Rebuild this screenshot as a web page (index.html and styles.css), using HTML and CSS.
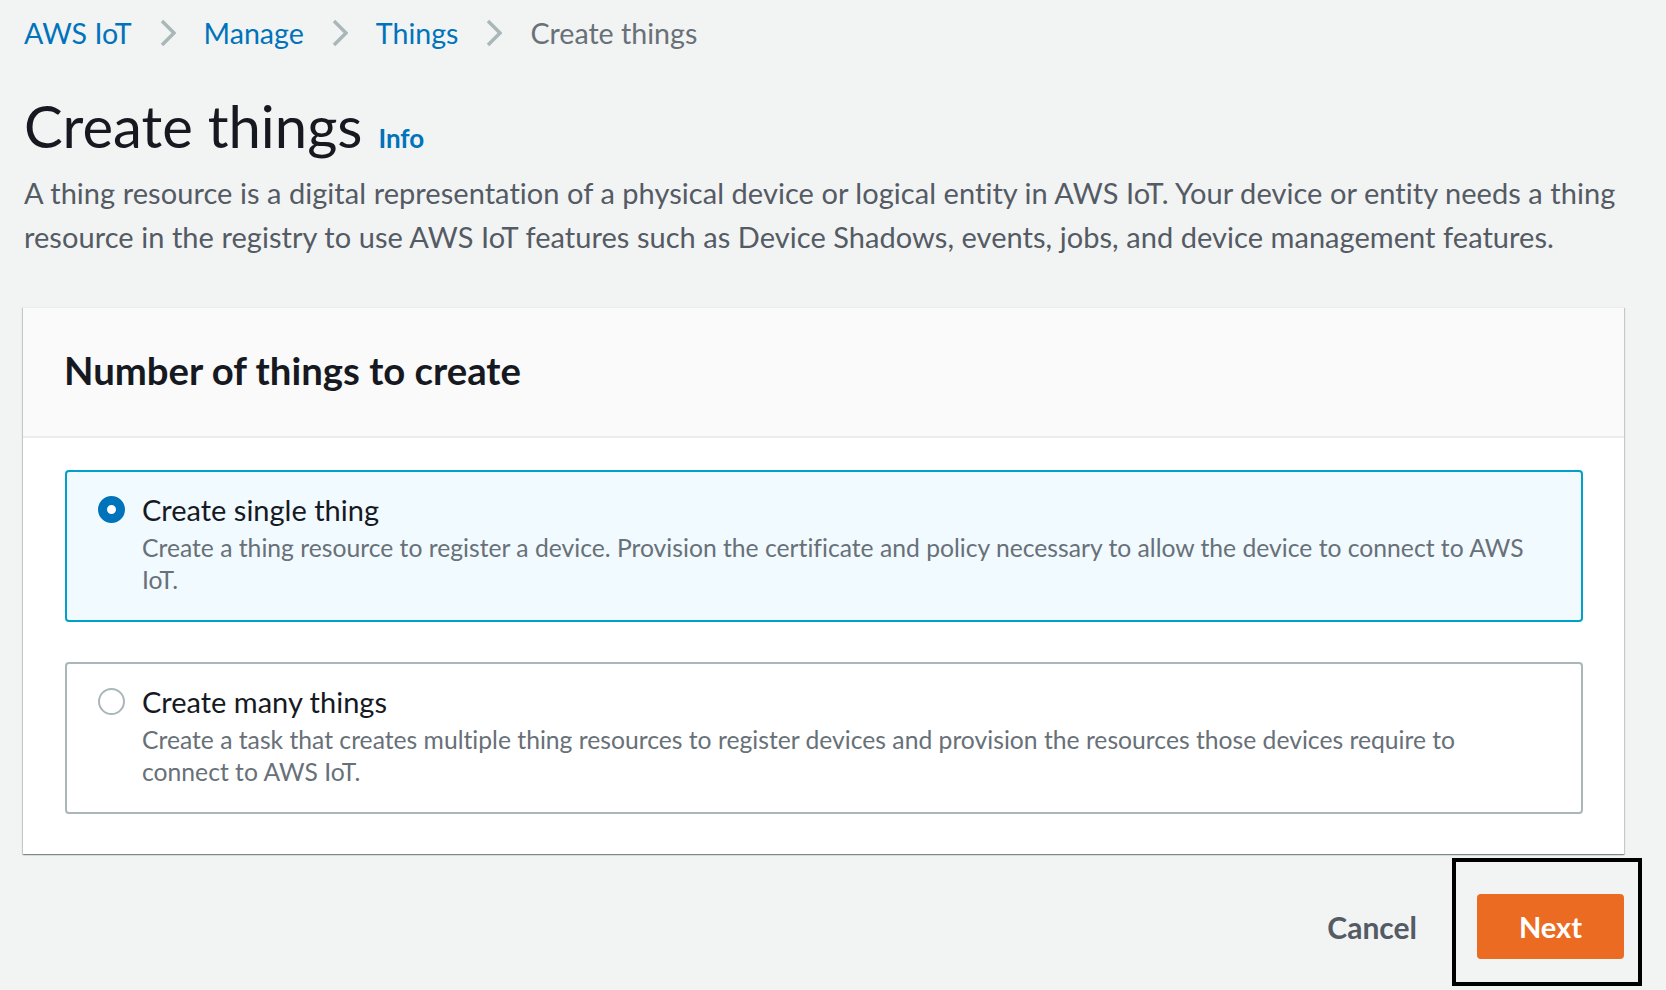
FILE: index.html
```html
<!DOCTYPE html>
<html lang="en">
<head>
<meta charset="utf-8">
<title>Create things</title>
<link rel="stylesheet" href="styles.css">
</head>
<body>
<div class="page">
  <nav class="breadcrumbs">
    <a class="crumb" href="#">AWS IoT</a>
    <svg class="chev" viewBox="0 0 16 28" aria-hidden="true"><path d="M2 2 L14 14 L2 26" fill="none" stroke="#aab7b8" stroke-width="3.5"/></svg>
    <a class="crumb" href="#">Manage</a>
    <svg class="chev" viewBox="0 0 16 28" aria-hidden="true"><path d="M2 2 L14 14 L2 26" fill="none" stroke="#aab7b8" stroke-width="3.5"/></svg>
    <a class="crumb" href="#">Things</a>
    <svg class="chev" viewBox="0 0 16 28" aria-hidden="true"><path d="M2 2 L14 14 L2 26" fill="none" stroke="#aab7b8" stroke-width="3.5"/></svg>
    <span class="crumb current">Create things</span>
  </nav>

  <div class="title-row">
    <h1 class="title">Create things</h1>
    <a class="info" href="#">Info</a>
  </div>
  <p class="lead">A thing resource is a digital representation of a physical device or logical entity in AWS IoT. Your device or entity needs a thing resource in the registry to use AWS IoT features such as Device Shadows, events, jobs, and device management features.</p>

  <section class="card">
    <div class="card-header">
      <h2 class="card-title">Number of things to create</h2>
    </div>
    <div class="card-body">
      <div class="tile selected">
        <span class="radio checked"></span>
        <div class="tile-text">
          <div class="tile-label">Create single thing</div>
          <div class="tile-desc">Create a thing resource to register a device. Provision the certificate and policy necessary to allow the device to connect to AWS IoT.</div>
        </div>
      </div>
      <div class="tile">
        <span class="radio"></span>
        <div class="tile-text">
          <div class="tile-label">Create many things</div>
          <div class="tile-desc">Create a task that creates multiple thing resources to register devices and provision the resources those devices require to connect to AWS IoT.</div>
        </div>
      </div>
    </div>
  </section>

  <div class="actions">
    <button class="btn-cancel" type="button">Cancel</button>
    <div class="next-wrap">
      <button class="btn-next" type="button">Next</button>
      <span class="highlight"></span>
    </div>
  </div>
</div>
</body>
</html>
```

FILE: styles.css
```css
* { box-sizing: border-box; }
html, body {
  margin: 0;
  padding: 0;
  background: #f2f3f3;
}
body {
  font-family: Lato, "Open Sans", "Liberation Sans", sans-serif;
  font-variant-ligatures: none;
  color: #16191f;
  width: 1666px;
  height: 990px;
  overflow: hidden;
}
.page {
  padding: 11px 42px 0 24px;
}

.breadcrumbs {
  display: flex;
  align-items: center;
  height: 44px;
}
.crumb {
  font-size: 28.6px;
  line-height: 44px;
  color: #0073bb;
  text-decoration: none;
}
.crumb.current { color: #687078; }
.chev {
  width: 16px;
  height: 28px;
  margin: 0 28px 0 28px;
  flex: none;
}

.title-row {
  display: flex;
  align-items: baseline;
  margin-top: 39px;
}
.title {
  margin: 0;
  font-size: 58px;
  line-height: 64px;
  font-weight: 400;
  color: #16191f;
}
.info {
  margin-left: 16px;
  font-size: 26px;
  font-weight: 700;
  color: #0073bb;
  text-decoration: none;
}
.lead {
  margin: 13px 0 0;
  font-size: 29px;
  letter-spacing: 0.05px;
  line-height: 44px;
  color: #545b64;
}

.card {
  margin-top: 48px;
  margin-left: -1px;
  background: #fff;
  box-shadow: 0 1px 1px 0 rgba(0,28,36,.3), 1px 1px 1px 0 rgba(0,28,36,.15), -1px 1px 1px 0 rgba(0,28,36,.15);
  border-top: 1px solid #eaeded;
}
.card-header {
  background: #fafafa;
  border-bottom: 2px solid #eaeded;
  padding: 40px 41px 44px;
}
.card-title {
  margin: 0;
  font-size: 38.3px;
  line-height: 44px;
  font-weight: 700;
  color: #16191f;
}
.card-body {
  padding: 32px 41px 40px 42px;
  display: flex;
  flex-direction: column;
  gap: 40px;
}

.tile {
  display: flex;
  align-items: flex-start;
  gap: 17px;
  border: 2px solid #aab7b8;
  border-radius: 4px;
  padding: 16px 40px 24px 31px;
  background: #fff;
}
.tile.selected {
  border-color: #00a1c9;
  background: #f1faff;
}
.radio {
  flex: none;
  width: 27px;
  height: 27px;
  margin-top: 8px;
  border-radius: 50%;
  border: 2px solid #aab7b8;
  background: #fff;
}
.radio.checked {
  border: 9px solid #0073bb;
}
.tile-label {
  font-size: 29px;
  line-height: 44px;
  color: #16191f;
}
.tile-desc {
  font-size: 24.7px;
  line-height: 32px;
  color: #687078;
}

.actions {
  display: flex;
  justify-content: flex-end;
  align-items: center;
  margin-top: 40px;
}
.btn-cancel {
  background: none;
  border: none;
  padding: 0;
  margin-right: 60px;
  font-family: inherit;
  font-size: 30px;
  font-weight: 700;
  color: #545b64;
}
.next-wrap {
  position: relative;
}
.btn-next {
  display: block;
  width: 147px;
  height: 65px;
  border: none;
  border-radius: 4px;
  background: #ec6b22;
  color: #fff;
  font-family: inherit;
  font-size: 29px;
  font-weight: 700;
}
.highlight {
  position: absolute;
  left: -25px;
  right: -18px;
  top: -36px;
  bottom: -27px;
  border: 4px solid #000;
  pointer-events: none;
}
```
